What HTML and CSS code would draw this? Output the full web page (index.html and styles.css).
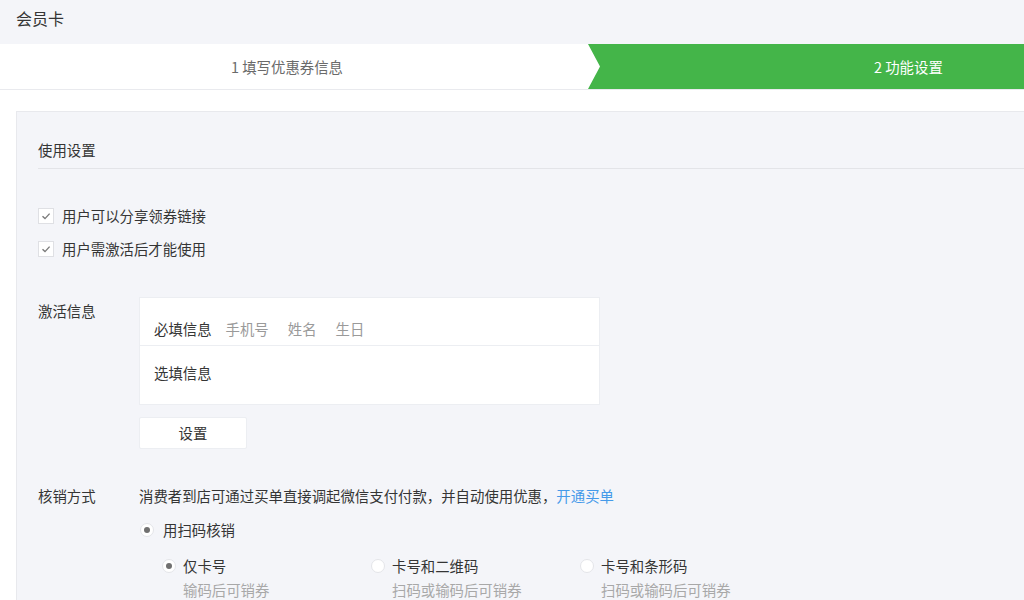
FILE: index.html
```html
<!DOCTYPE html>
<html lang="zh-CN">
<head>
<meta charset="utf-8">
<title>会员卡</title>
<link rel="stylesheet" href="styles.css">
</head>
<body>
<div class="page">
  <div class="header">会员卡</div>
  <div class="steps">
    <div class="step step-done">1 填写优惠券信息</div>
    <div class="step step-active">2 功能设置</div>
  </div>
  <div class="panel">
    <div class="section-title">使用设置</div>
    <div class="checks">
      <label class="check-row"><span class="checkbox"><svg viewBox="0 0 16 16" width="16" height="16"><path d="M4.5 8.2 L7 10.6 L11.6 5.6" fill="none" stroke="#7a7a7a" stroke-width="1.4"/></svg></span>用户可以分享领券链接</label>
      <label class="check-row"><span class="checkbox"><svg viewBox="0 0 16 16" width="16" height="16"><path d="M4.5 8.2 L7 10.6 L11.6 5.6" fill="none" stroke="#7a7a7a" stroke-width="1.4"/></svg></span>用户需激活后才能使用</label>
    </div>
    <div class="form-row form-activate">
      <div class="form-label">激活信息</div>
      <div class="form-body">
        <div class="info-box">
          <div class="info-row info-required"><span class="info-key">必填信息</span><span class="info-item">手机号</span><span class="info-item">姓名</span><span class="info-item">生日</span></div>
          <div class="info-row info-optional"><span class="info-key">选填信息</span></div>
        </div>
        <button class="btn">设置</button>
      </div>
    </div>
    <div class="form-row form-verify">
      <div class="form-label">核销方式</div>
      <div class="form-body">
        <div class="desc">消费者到店可通过买单直接调起微信支付付款，并自动使用优惠，<a class="link">开通买单</a></div>
        <div class="radio-row"><span class="radio checked"></span>用扫码核销</div>
        <div class="sub-options">
          <div class="option">
            <div class="radio-row"><span class="radio checked"></span>仅卡号</div>
            <div class="hint">输码后可销券</div>
          </div>
          <div class="option">
            <div class="radio-row"><span class="radio"></span>卡号和二维码</div>
            <div class="hint">扫码或输码后可销券</div>
          </div>
          <div class="option">
            <div class="radio-row"><span class="radio"></span>卡号和条形码</div>
            <div class="hint">扫码或输码后可销券</div>
          </div>
        </div>
      </div>
    </div>
  </div>
</div>
</body>
</html>
```

FILE: styles.css
```css
* { box-sizing: border-box; }
html, body {
  margin: 0;
  padding: 0;
  background: #fff;
  overflow: hidden;
}
body {
  font-family: "Noto Sans CJK SC", "Noto Sans", sans-serif;
  font-size: 14.4px;
  color: #353535;
  line-height: 20px;
}
.page { width: 1024px; height: 600px; overflow: hidden; }

.header {
  height: 44px;
  background: #f4f5f9;
  padding: 7px 0 0 16px;
  font-size: 16px;
  line-height: 22px;
  color: #353535;
}

.steps {
  display: flex;
  height: 46px;
  border-bottom: 1px solid #e9eaee;
  background: #fff;
}
.step {
  height: 45px;
  line-height: 45px;
  font-size: 14.4px;
}
.step-done {
  width: 588px;
  padding-right: 14px;
  text-align: center;
  color: #6a6a6a;
}
.step-active {
  flex: 1;
  background: #44b549;
  color: #fff;
  padding-left: 286px;
  clip-path: polygon(0 0, 100% 0, 100% 100%, 0 100%, 12px 50%);
}

.panel {
  margin: 21px 0 0 16px;
  background: #f4f5f9;
  border-top: 1px solid #e8e9ed;
  border-left: 1px solid #e8e9ed;
  padding: 28px 0 0 21px;
  height: 600px;
}
.section-title {
  padding-bottom: 8px;
  border-bottom: 1px solid #e3e4e8;
}

.checks {
  margin-top: 37px;
  display: flex;
  flex-direction: column;
  gap: 13px;
}
.check-row {
  display: flex;
  align-items: center;
  height: 20px;
}
.checkbox {
  width: 16px;
  height: 16px;
  background: #fff;
  border: 1px solid #dfe0e4;
  margin-right: 8px;
  display: flex;
  align-items: center;
  justify-content: center;
}
.checkbox svg { display: block; flex: none; }

.form-row { display: flex; }
.form-label { width: 101px; flex: none; }
.form-activate { margin-top: 38px; }
.form-activate .form-label { padding-top: 4px; }

.info-box {
  width: 461px;
  background: #fff;
  border: 1px solid #eceef2;
}
.info-row { display: flex; padding-left: 14px; }
.info-required {
  padding-top: 21px;
  padding-bottom: 6px;
  border-bottom: 1px solid #eceef2;
}
.info-optional {
  padding-top: 17px;
  padding-bottom: 21px;
}
.info-key { margin-right: 14px; }
.info-item { color: #9a9a9a; margin-right: 19px; }

.btn {
  display: block;
  margin-top: 12px;
  width: 108px;
  height: 32px;
  background: #fff;
  border: 1px solid #eceef2;
  border-radius: 2px;
  font: inherit;
  color: #353535;
  padding: 0;
}

.form-verify { margin-top: 37px; }
.desc { height: 20px; }
.link { color: #459ae9; }

.radio-row {
  display: flex;
  align-items: center;
  height: 20px;
}
.form-body > .radio-row { margin-top: 14px; margin-left: 1px; }
.radio {
  width: 14px;
  height: 14px;
  border-radius: 50%;
  background: #fff;
  border: 1px solid #e4e5e9;
  margin-right: 9px;
  position: relative;
  flex: none;
}
.radio.checked::after {
  content: "";
  position: absolute;
  left: 3px;
  top: 3px;
  width: 6px;
  height: 6px;
  border-radius: 50%;
  background: #707070;
}

.sub-options {
  display: flex;
  margin-top: 16px;
  margin-left: 23px;
}
.option { width: 209px; }
.option .radio { margin-right: 7px; }
.hint {
  margin-top: 4px;
  padding-left: 21px;
  color: #a8a8a8;
}
```
